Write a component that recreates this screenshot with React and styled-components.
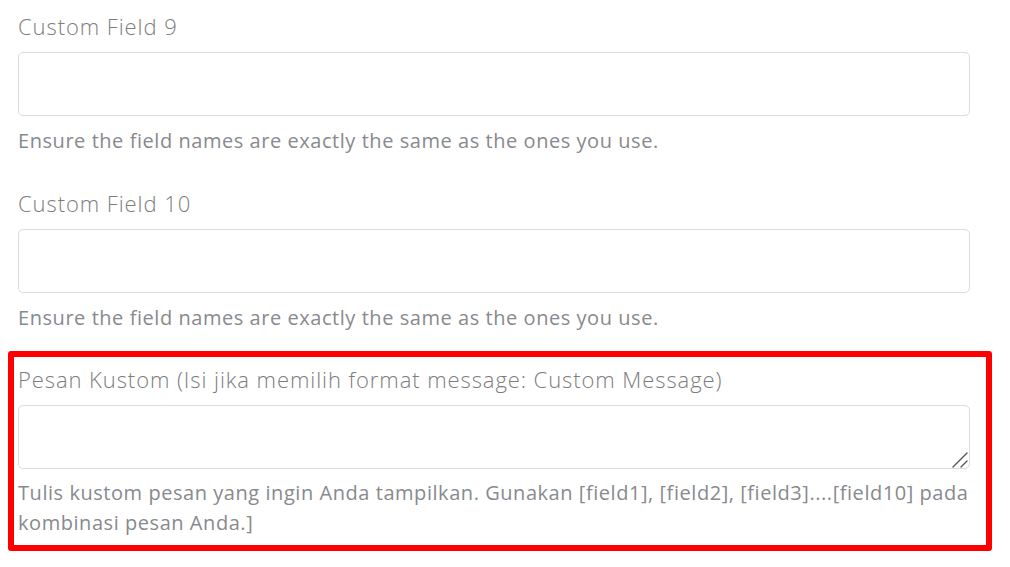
import React from "react";
import styled, { createGlobalStyle } from "styled-components";

const Global = createGlobalStyle`
  html, body { margin: 0; padding: 0; background: #fff; }
  body { font-family: "Open Sans", "Noto Sans", sans-serif; font-variant-ligatures: none; }
  * { box-sizing: border-box; }
`;

const Page = styled.div`
  padding: 11px 40px 0 18px;
  width: 1010px;
`;

const Group = styled.div`
  display: flex;
  flex-direction: column;
  margin-bottom: ${(p) => (p.$last ? "0" : "32px")};
`;

const Highlight = styled.div`
  margin: -14px -22px 0 -10px;
  padding: 7px 16px 7px 4px;
  border: 6px solid #ff0000;
  border-radius: 3px;
`;

const Label = styled.label`
  font-size: 22px;
  font-weight: 300;
  line-height: 30px;
  letter-spacing: 0.92px;
  color: #7d7d7d;
  margin-bottom: 11px;
  white-space: nowrap;
`;

const Input = styled.input`
  height: 64px;
  width: 100%;
  border: 1px solid #dcdcdc;
  border-radius: 5px;
  background: #fff;
  outline: none;
`;

const AreaWrap = styled.div`
  position: relative;
  height: 64px;
`;

const TextArea = styled.textarea`
  height: 64px;
  width: 100%;
  border: 1px solid #dcdcdc;
  border-radius: 5px;
  background: #fff;
  outline: none;
  resize: none;
  display: block;
`;

const Grip = styled.svg`
  position: absolute;
  right: 1px;
  bottom: 0;
  width: 18px;
  height: 18px;
  pointer-events: none;
`;

const Help = styled.div`
  margin-top: ${(p) => (p.$tight ? "9px" : "10px")};
  font-size: 20px;
  font-weight: 400;
  line-height: 30px;
  letter-spacing: 0.55px;
  color: #878a8e;
`;

const HELP = "Ensure the field names are exactly the same as the ones you use.";

export default function App() {
  return (
    <>
      <Global />
      <Page>
        <Group>
          <Label>Custom Field 9</Label>
          <Input type="text" />
          <Help>{HELP}</Help>
        </Group>
        <Group>
          <Label>Custom Field 10</Label>
          <Input type="text" />
          <Help>{HELP}</Help>
        </Group>
        <Highlight>
          <Group $last>
            <Label>Pesan Kustom (Isi jika memilih format message: Custom Message)</Label>
            <AreaWrap>
              <TextArea />
              <Grip viewBox="0 0 18 18">
                <path d="M2 16 L16 2 M10 16 L16 10" stroke="#555" strokeWidth="1.4" strokeLinecap="round" fill="none" />
              </Grip>
            </AreaWrap>
            <Help $tight>
              Tulis kustom pesan yang ingin Anda tampilkan. Gunakan [field1], [field2], [field3]....[field10] pada kombinasi pesan Anda.]
            </Help>
          </Group>
        </Highlight>
      </Page>
    </>
  );
}
